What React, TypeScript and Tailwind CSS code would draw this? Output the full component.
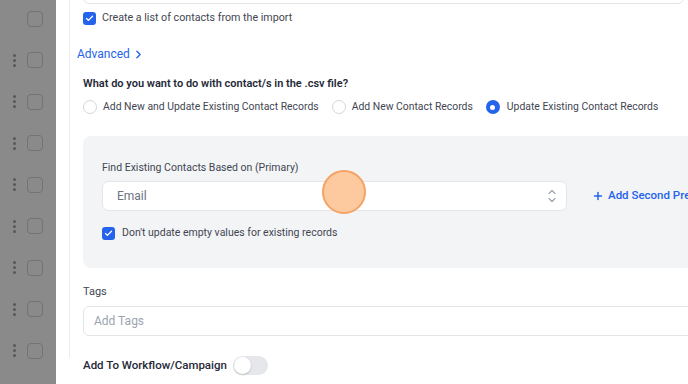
import { ChevronRight, Check, Plus } from "lucide-react";

const rows = Array.from({ length: 9 }, (_, i) => i);

function Checkbox() {
  return (
    <span className="grid h-[13px] w-[13px] flex-shrink-0 place-items-center rounded-[3px] bg-[#2563eb]">
      <Check className="h-[9px] w-[9px] text-white" strokeWidth={3.5} />
    </span>
  );
}

function Radio({ checked }: { checked?: boolean }) {
  return checked ? (
    <span className="grid h-[14px] w-[14px] flex-shrink-0 place-items-center rounded-full bg-[#2563eb]">
      <span className="h-[5px] w-[5px] rounded-full bg-white" />
    </span>
  ) : (
    <span className="h-[14px] w-[14px] flex-shrink-0 rounded-full border border-[#d4d7dc] bg-white" />
  );
}

export default function App() {
  return (
    <div className="flex h-[384px] w-[688px] overflow-hidden bg-white font-['Roboto',sans-serif] text-[#374151]">
      {/* dimmed list behind the drawer */}
      <div className="w-[56px] flex-shrink-0 bg-[#8a8a8a]">
        <div className="-mt-[2px] flex flex-col">
          {rows.map((i) => (
            <div key={i} className="flex h-[41.5px] items-center">
              <div className="flex w-[27px] justify-center pl-[1px]">
                {i > 0 && (
                  <div className="flex flex-col gap-[2px]">
                    <span className="h-[3px] w-[3px] rounded-full bg-[#585858]" />
                    <span className="h-[3px] w-[3px] rounded-full bg-[#585858]" />
                    <span className="h-[3px] w-[3px] rounded-full bg-[#585858]" />
                  </div>
                )}
              </div>
              <span className="h-[16px] w-[16px] rounded-[4px] border border-[#737373]" />
            </div>
          ))}
        </div>
      </div>

      <div className="relative flex-1 pl-[13px] pr-[1px]">
        <div className="h-full border-l border-r border-[#eceef1] pl-[13px]">
          <div className="-mt-[26px] h-[30px] w-[601px] rounded-md border border-[#e3e5e8] bg-white" />

          <div className="mt-[7px] flex items-center gap-[6px]">
            <Checkbox />
            <span className="whitespace-nowrap text-[10.7px] leading-[14px] text-[#3f4652]">
              Create a list of contacts from the import
            </span>
          </div>

          <div className="-ml-[6px] mt-[21px] flex items-center gap-[2px] text-[#2563eb]">
            <span className="text-[12px] leading-[16px]">Advanced</span>
            <ChevronRight className="h-[13px] w-[13px]" strokeWidth={2.5} />
          </div>

          <p className="mt-[14px] whitespace-nowrap text-[11px] font-semibold leading-[16px] text-[#1f2937]">
            What do you want to do with contact/s in the .csv file?
          </p>

          <div className="mt-[8px] flex items-center whitespace-nowrap text-[10.4px] leading-[14px] text-[#3f4652]">
            <div className="flex items-center gap-[6px]">
              <Radio />
              <span>Add New and Update Existing Contact Records</span>
            </div>
            <div className="ml-[13px] flex items-center gap-[6px]">
              <Radio />
              <span>Add New Contact Records</span>
            </div>
            <div className="ml-[13px] flex items-center gap-[7px]">
              <Radio checked />
              <span>Update Existing Contact Records</span>
            </div>
          </div>

          <div className="mt-[22px] w-[640px] rounded-lg bg-[#f3f4f6] pb-[28px] pl-[19px] pt-[25px]">
            <p className="whitespace-nowrap text-[10.5px] leading-[14px] text-[#3f4652]">
              Find Existing Contacts Based on (Primary)
            </p>
            <div className="mt-[6px] flex items-center">
              <div className="flex h-[30px] w-[465px] flex-shrink-0 items-center justify-between rounded-md border border-[#e3e5e8] bg-white pl-[14px] pr-[10px]">
                <span className="text-[12px] text-[#6b7280]">Email</span>
                <svg width="8" height="14" viewBox="0 0 8 14" fill="none" stroke="#9ca3af" strokeWidth="1.2" strokeLinecap="round" strokeLinejoin="round">
                  <path d="M1 4.5 4 1.5 7 4.5" />
                  <path d="M1 9.5 4 12.5 7 9.5" />
                </svg>
              </div>
              <div className="ml-[25px] flex items-center gap-[4px] text-[#2563eb]">
                <Plus className="h-[12px] w-[12px]" strokeWidth={3} />
                <span className="whitespace-nowrap text-[11.5px] font-medium">Add Second Preference</span>
              </div>
            </div>
            <div className="mt-[15px] flex items-center gap-[7px]">
              <Checkbox />
              <span className="whitespace-nowrap text-[10.5px] leading-[14px] text-[#3f4652]">
                Don't update empty values for existing records
              </span>
            </div>
          </div>

          <p className="mt-[17px] text-[11px] leading-[14px] text-[#3f4652]">Tags</p>
          <div className="mt-[7px] flex h-[30px] w-[640px] items-center rounded-md border border-[#e3e5e8] bg-white pl-[10px]">
            <span className="text-[12px] text-[#9ca3af]">Add Tags</span>
          </div>

          <div className="mt-[20px] flex items-center gap-[6px]">
            <span className="whitespace-nowrap text-[11.5px] font-medium text-[#1f2937]">Add To Workflow/Campaign</span>
            <span className="flex h-[19px] w-[35px] items-center rounded-full bg-[#e5e7eb] px-[1px]">
              <span className="h-[17px] w-[17px] rounded-full bg-white shadow-[0_1px_2px_rgba(0,0,0,0.2)]" />
            </span>
          </div>
        </div>

        {/* click indicator */}
        <span className="absolute left-[266px] top-[170px] h-[44px] w-[44px] rounded-full border-2 border-[#f5a263] bg-[#fdc79b]/95" />
      </div>
    </div>
  );
}
